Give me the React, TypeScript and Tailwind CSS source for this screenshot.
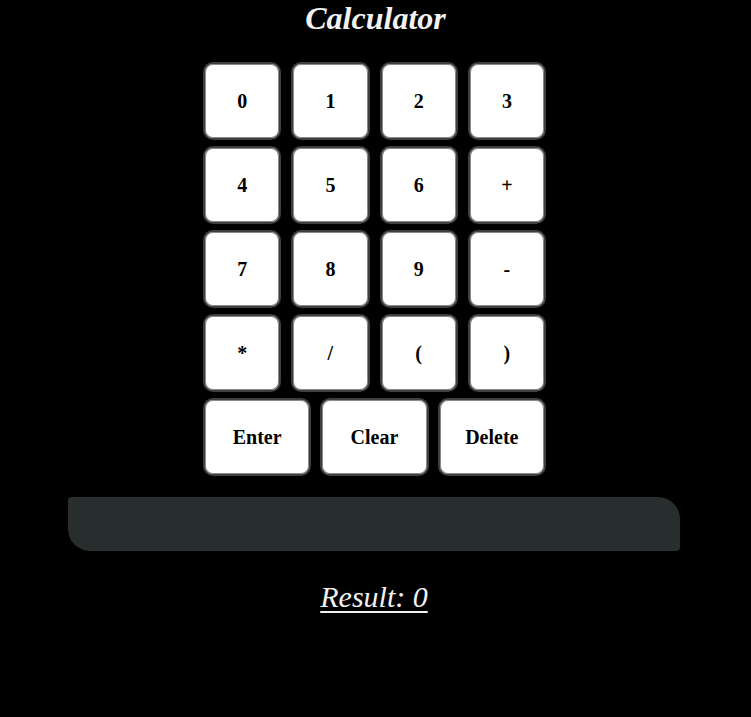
const keys = ["0", "1", "2", "3", "4", "5", "6", "+", "7", "8", "9", "-", "*", "/", "(", ")"];
const actions = ["Enter", "Clear", "Delete"];

const keyClass =
  "flex items-center justify-center bg-white text-black font-bold text-[20px] rounded-[10px] border-2 border-[#3f3f3f] shadow-[inset_0_0_0_1px_#8a8a8a]";

export default function App() {
  return (
    <div className="min-h-[717px] bg-black flex flex-col items-center font-['Liberation_Serif','Times_New_Roman',serif]">
      <h1 className="text-[32px] font-bold italic text-[#f2f2f2] leading-[37px]">Calculator</h1>

      <div className="mt-[25px] ml-[-2px] w-[343px] flex flex-col gap-[6px]">
        <div className="grid grid-cols-4 gap-x-[10px] gap-y-[6px]">
          {keys.map((k) => (
            <button key={k} className={`${keyClass} h-[78px]`}>
              {k}
            </button>
          ))}
        </div>
        <div className="flex gap-[9px]">
          {actions.map((a) => (
            <button key={a} className={`${keyClass} h-[78px] flex-1`}>
              {a}
            </button>
          ))}
        </div>
      </div>

      <div className="mt-[21px] ml-[-3px] w-[612px] h-[54px] bg-[#282d2e] rounded-tl-[4px] rounded-tr-[22px] rounded-br-[4px] rounded-bl-[22px]" />

      <p className="mt-[28px] ml-[-3px] text-[30px] italic text-[#f2f2f2] underline underline-offset-[4px] decoration-[2px] leading-[35px]">
        Result: 0
      </p>
    </div>
  );
}
